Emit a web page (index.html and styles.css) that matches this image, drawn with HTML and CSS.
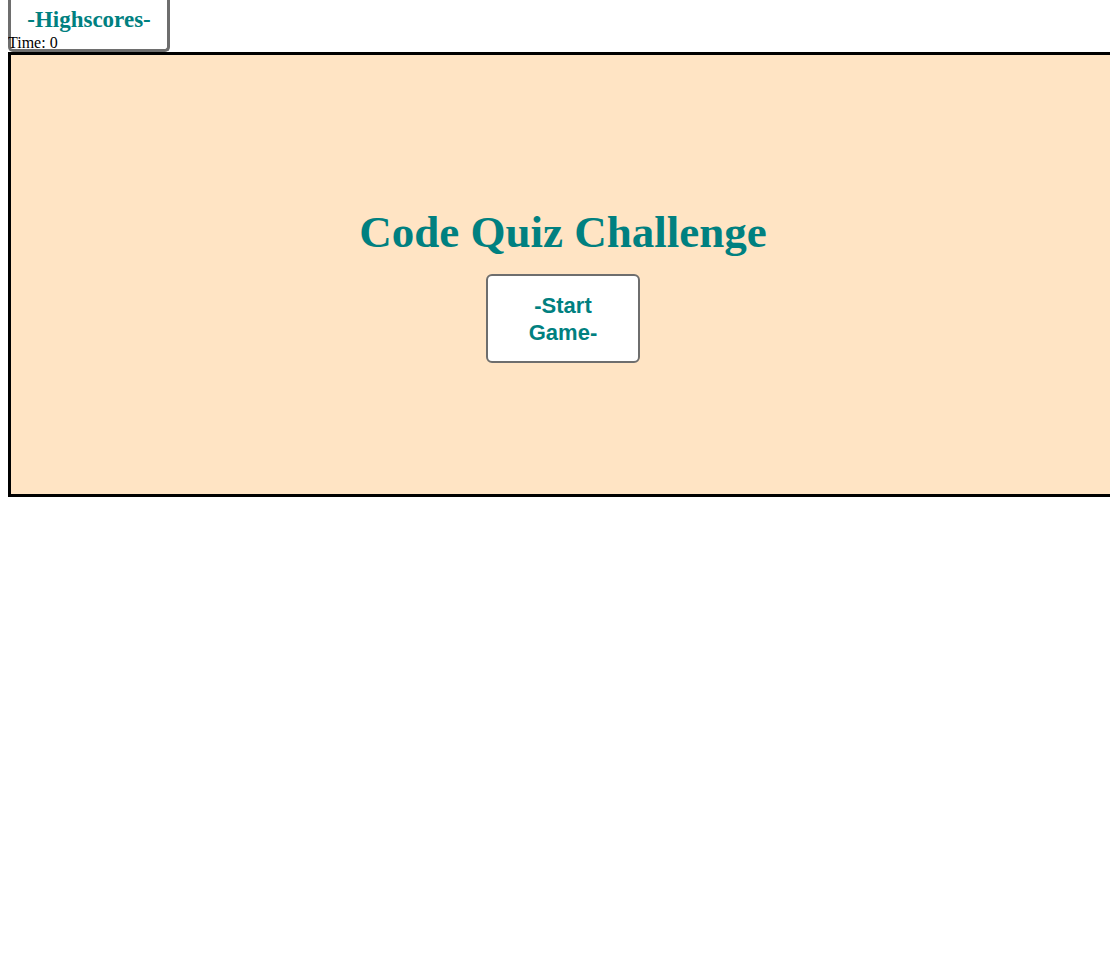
FILE: index.html
```html
<!DOCTYPE html>
<html>
<head>
<meta charset="utf-8">
<title>Code Quiz</title>
<link rel="stylesheet" href="styles.css">
</head>
<body>
<header class="top">
  <button class="hs-btn">-Highscores-</button>
  <div class="timer">Time: 0</div>
</header>
<main class="quiz-box">
  <h1 class="title">Code Quiz Challenge</h1>
  <button class="start-btn">-Start Game-</button>
</main>
</body>
</html>
```
FILE: styles.css
```css
html, body {
  background: #ffffff;
}
body {
  margin: 0 8px 8px;
  font-family: "Liberation Serif", "Times New Roman", serif;
  font-size: 16px;
  color: #000;
}
.top {
  display: flex;
  flex-direction: column;
  align-items: flex-start;
}
.hs-btn {
  height: 52px;
  box-sizing: border-box;
  padding: 0 0 9px;
  width: 162px;
  white-space: nowrap;
  background: #ffffff;
  border: 3px solid #6e6e6e;
  border-top-width: 0;
  border-radius: 0 0 5px 5px;
  font-family: "Liberation Serif", "Times New Roman", serif;
  font-weight: bold;
  font-size: 23px;
  color: #008080;
  line-height: 28px;
}
.timer {
  margin-top: -18px;
  line-height: 18px;
  height: 18px;
  font-size: 16px;
  position: relative;
}
.quiz-box {
  box-sizing: border-box;
  width: 1110px;
  height: 445px;
  border: 3px solid #000;
  background: #ffe4c4;
  text-align: center;
  padding-top: 150px;
}
.title {
  margin: 0;
  font-family: "Liberation Serif", "Times New Roman", serif;
  font-weight: bold;
  font-size: 45px;
  line-height: 55px;
  color: #008080;
}
.start-btn {
  margin-top: 14px;
  box-sizing: border-box;
  width: 154px;
  height: 89px;
  padding: 0 20px;
  background: #ffffff;
  border: 2px solid #6e6e6e;
  border-radius: 6px;
  font-family: "Liberation Sans", Arial, sans-serif;
  font-weight: bold;
  font-size: 22px;
  line-height: 27px;
  color: #008080;
}
```
